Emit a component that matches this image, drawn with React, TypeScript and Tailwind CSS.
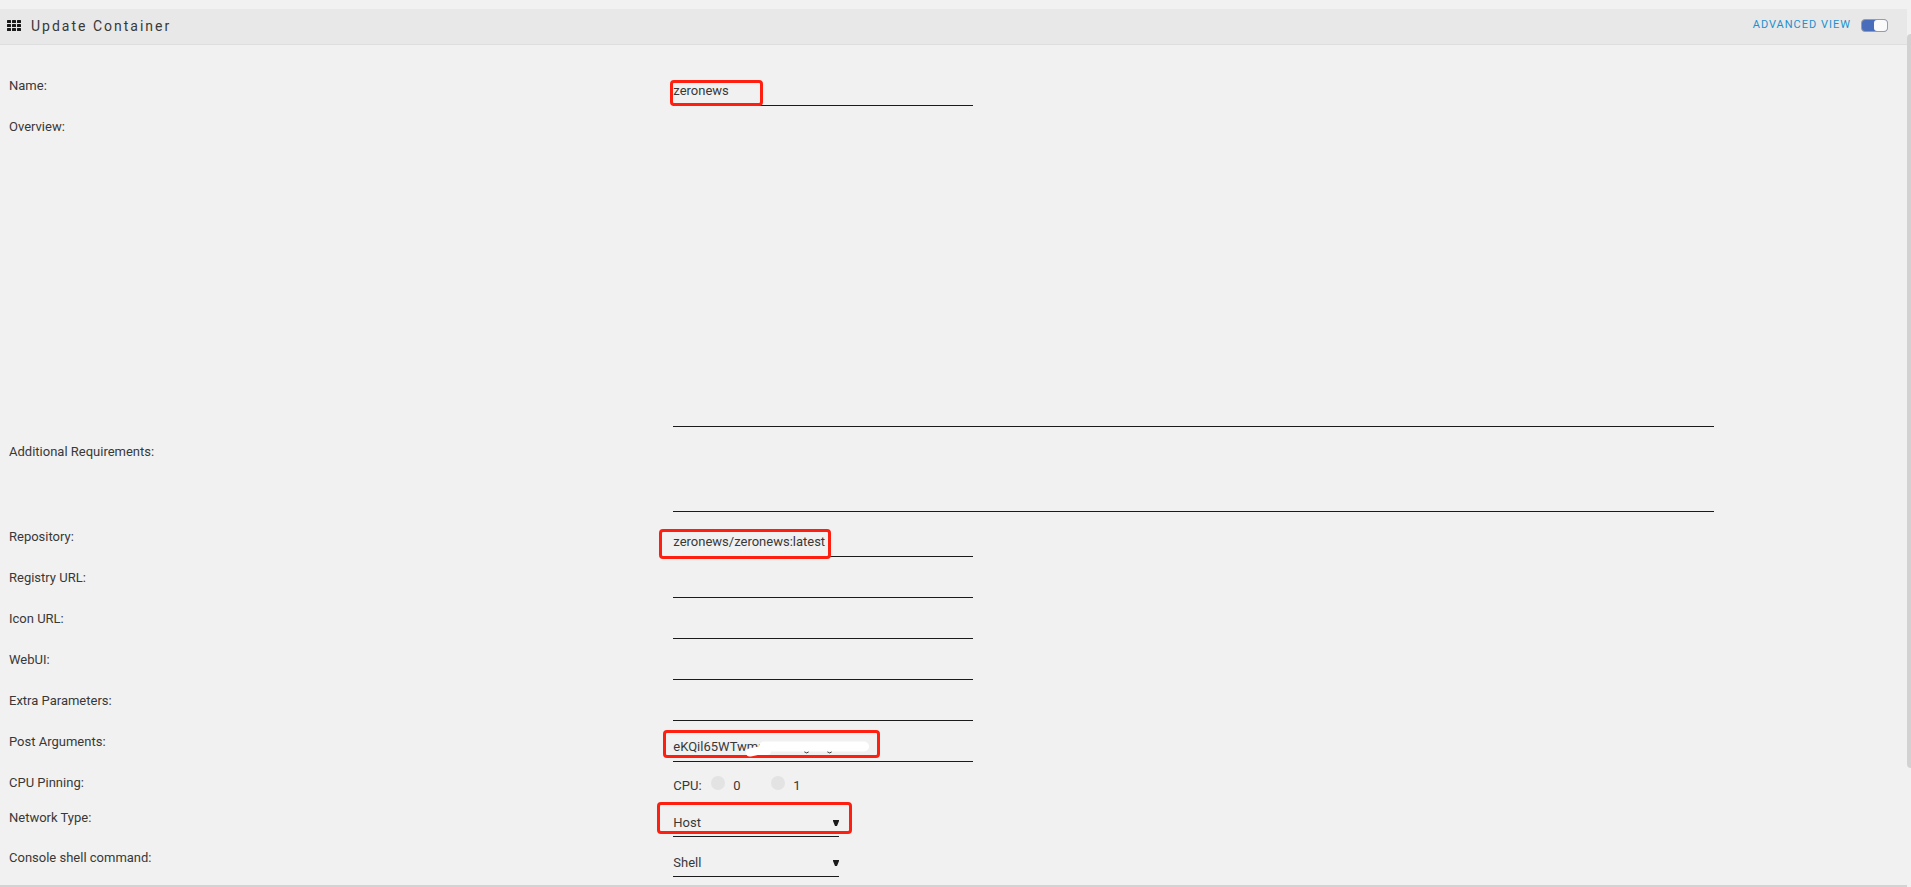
import type { ReactNode } from 'react';

function Row({ label, id, className, children }: { label: string; id: string; className: string; children: ReactNode }) {
  return (
    <div className={`flex shrink-0 ${className}`}>
      <label htmlFor={id} className="w-[35%] shrink-0 pt-1.5 leading-5">
        {label}
      </label>
      <div className="relative flex-1">{children}</div>
    </div>
  );
}

function TextField({ id, value = '' }: { id: string; value?: string }) {
  return (
    <input
      id={id}
      type="text"
      defaultValue={value}
      className="mt-2.5 block h-[26px] w-[300px] border-b border-[#1c1b1b] bg-transparent pb-1 leading-5 outline-none"
    />
  );
}

function SelectField({ id, options }: { id: string; options: string[] }) {
  return (
    <div className="relative mt-2.5 w-[166px]">
      <select
        id={id}
        className="block h-[25px] w-full appearance-none border-b border-[#1c1b1b] bg-transparent pb-0.5 leading-5 outline-none"
      >
        {options.map((option) => (
          <option key={option}>{option}</option>
        ))}
      </select>
      <svg className="pointer-events-none absolute right-0 top-2 h-1.5 w-[6px]" viewBox="0 0 6 6" fill="#1c1b1b">
        <path d="M0 0h6v1L4 6H2L0 1z" />
      </svg>
    </div>
  );
}

const box = 'pointer-events-none absolute rounded border-3 border-[#ff1f10]';

export default function App() {
  return (
    <div className="flex h-screen overflow-hidden bg-[#f1f1f1] font-['Roboto','Noto_Sans_CJK_SC',sans-serif] text-[13px] text-[#383838]">
      <main className="flex min-w-0 flex-1 flex-col pt-[9px]">
        <header className="flex h-9 shrink-0 items-center justify-between border-b border-[#dedede] bg-[#e8e8e8] pl-[7px] pr-[19px]">
          <h1 className="flex items-center gap-2.5 pb-0.5 text-sm tracking-[2px]">
            <svg className="h-[11px] w-[14px]" viewBox="0 0 14 11" fill="#1c1b1b">
              {[0, 4, 8].map((y) =>
                [0, 5, 10].map((x) => <rect key={`${x}-${y}`} x={x} y={y} width="4" height="3" rx="0.5" />),
              )}
            </svg>
            Update Container
          </h1>
          <label className="flex items-center gap-2.5 pb-[3px] text-[11px] tracking-[1px] text-[#1b91cf]">
            ADVANCED VIEW
            <input type="checkbox" defaultChecked className="peer sr-only" />
            <span className="flex h-[13px] w-[27px] justify-end rounded border border-[#9c9c9c] bg-[#486dba]">
              <span className="w-[13px] rounded-[3px] bg-[#fafafa]" />
            </span>
          </label>
        </header>

        <form className="flex min-h-0 flex-1 flex-col overflow-hidden pl-[9px] pt-[25px]">
          <Row label="Name:" id="name" className="h-[41px]">
            <TextField id="name" value="zeronews" />
            <span className={`${box} -left-[3px] top-2.5 h-[26px] w-[93px]`} />
          </Row>
          <Row label="Overview:" id="overview" className="h-[325px]">
            <div className="h-[316px] pr-[193px]">
              <textarea id="overview" className="block h-full w-full resize-none border-b border-[#1c1b1b] outline-none" />
            </div>
          </Row>
          <Row label="Additional Requirements:" id="requires" className="h-[85px]">
            <div className="h-[76px] pr-[193px]">
              <textarea id="requires" className="block h-full w-full resize-none border-b border-[#1c1b1b] outline-none" />
            </div>
          </Row>
          <Row label="Repository:" id="repository" className="h-[41px]">
            <TextField id="repository" value="zeronews/zeronews:latest" />
            <span className={`${box} -left-3.5 top-2 h-[30px] w-[172px]`} />
          </Row>
          <Row label="Registry URL:" id="registry" className="h-[41px]">
            <TextField id="registry" />
          </Row>
          <Row label="Icon URL:" id="icon" className="h-[41px]">
            <TextField id="icon" />
          </Row>
          <Row label="WebUI:" id="webui" className="h-[41px]">
            <TextField id="webui" />
          </Row>
          <Row label="Extra Parameters:" id="extra" className="h-[41px]">
            <TextField id="extra" />
          </Row>
          <Row label="Post Arguments:" id="post" className="h-[41px]">
            <TextField id="post" value="eKQil65WTwmr" />
            <span className={`${box} -left-2.5 top-1 h-7 w-[217px]`} />
            <svg className="pointer-events-none absolute left-[70px] top-3.5 h-[18px] w-[130px]" viewBox="0 0 130 18" fill="none">
              <path d="M61 11.500q3 3 5 0M84 11.500q3 3 5 0" stroke="#383838" />
              <path d="M21 6.500H121" stroke="#fff" strokeWidth="10" strokeLinecap="round" />
              <path d="M7 12.500L14 11H24" stroke="#fff" strokeWidth="8" strokeLinecap="round" strokeLinejoin="round" />
            </svg>
          </Row>
          <Row label="CPU Pinning:" id="cpu0" className="h-[35px]">
            <div className="flex items-center pt-[9px] leading-5">
              <span className="w-[38px]">CPU:</span>
              <label className="flex w-[60px] items-center gap-2">
                <input id="cpu0" type="checkbox" className="-mt-1.5 size-3.5 appearance-none rounded-full bg-[#e3e3e3]" />0
              </label>
              <label className="flex items-center gap-2">
                <input type="checkbox" className="-mt-1.5 size-3.5 appearance-none rounded-full bg-[#e3e3e3]" />1
              </label>
            </div>
          </Row>
          <Row label="Network Type:" id="network" className="h-10">
            <SelectField id="network" options={['Host', 'Bridge', 'None']} />
            <span className={`${box} -left-4 top-0 h-8 w-[195px]`} />
          </Row>
          <Row label="Console shell command:" id="shell" className="h-10">
            <SelectField id="shell" options={['Shell', 'Bash']} />
          </Row>
        </form>
        <div className="h-0.5 shrink-0 bg-[#d3d3d3]" />
      </main>

      {/* page scrollbar */}
      <div className="w-1 shrink-0 pt-[34px]">
        <div className="h-[86%] rounded-l bg-[#d2d2d2]" />
      </div>
    </div>
  );
}
